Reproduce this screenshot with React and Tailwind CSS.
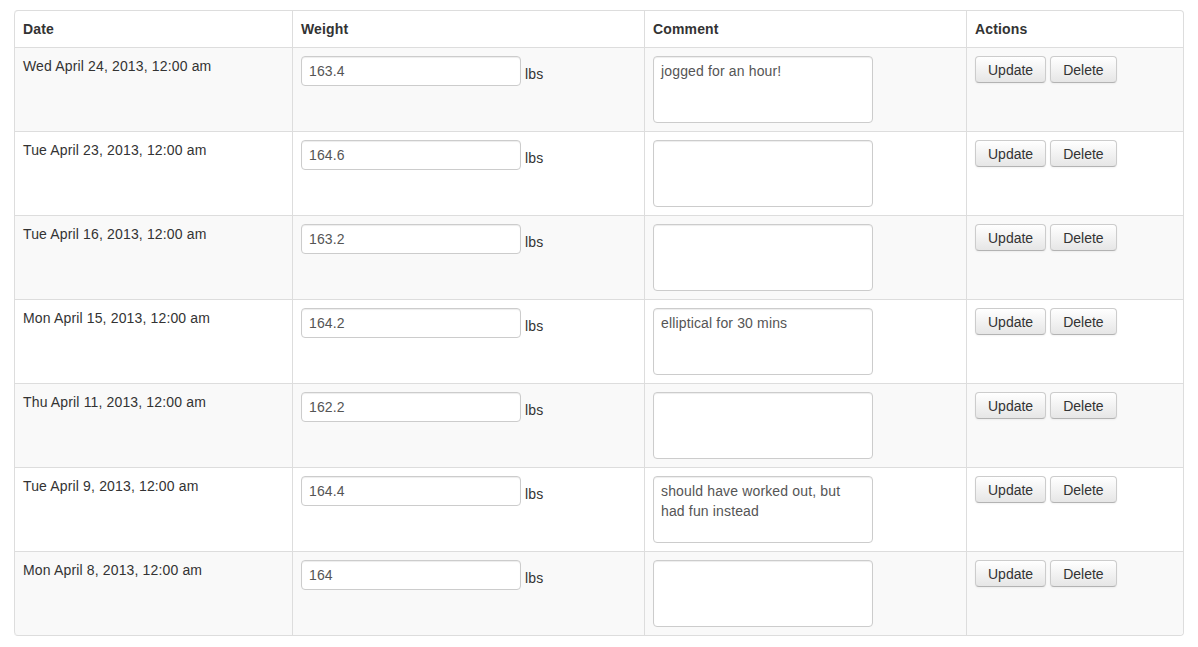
const entries = [
  { id: 1, date: "Wed April 24, 2013, 12:00 am", weight: "163.4", comment: "jogged for an hour!" },
  { id: 2, date: "Tue April 23, 2013, 12:00 am", weight: "164.6", comment: "" },
  { id: 3, date: "Tue April 16, 2013, 12:00 am", weight: "163.2", comment: "" },
  { id: 4, date: "Mon April 15, 2013, 12:00 am", weight: "164.2", comment: "elliptical for 30 mins" },
  { id: 5, date: "Thu April 11, 2013, 12:00 am", weight: "162.2", comment: "" },
  { id: 6, date: "Tue April 9, 2013, 12:00 am", weight: "164.4", comment: "should have worked out, but had fun instead" },
  { id: 7, date: "Mon April 8, 2013, 12:00 am", weight: "164", comment: "" },
]

const Btn = function ({ children }) {
  return (
    <button
      type="button"
      className="h-[27px] px-3 text-[14px] leading-none tracking-normal text-[#333] rounded-[4px] border border-[#ccc] border-b-[#b3b3b3] bg-linear-to-b from-white to-[#e6e6e6] shadow-[inset_0_1px_0_rgba(255,255,255,.2),0_1px_2px_rgba(0,0,0,.05)]"
    >
      {children}
    </button>
  )
}

export default function App() {
  const th = "border-l border-[#ddd] px-2 py-2 text-left font-bold leading-5"
  const td = "border-l border-t border-[#ddd] align-top px-2 pt-2 pb-2 leading-5"

  return (
    <div className="min-h-screen bg-white pl-[14px] pt-[10px] text-[14px] tracking-[0.15px] text-[#333] font-['Liberation_Sans',Arial,sans-serif]">
      <table className="table-fixed w-[1170px] border-separate border-spacing-0 border border-l-0 border-[#ddd] rounded-[4px]">
        <colgroup>
          <col className="w-[278px]" />
          <col className="w-[352px]" />
          <col className="w-[322px]" />
          <col className="w-[217px]" />
        </colgroup>
        <thead>
          <tr>
            <th className={`${th} rounded-tl-[4px]`}>Date</th>
            <th className={th}>Weight</th>
            <th className={th}>Comment</th>
            <th className={`${th} rounded-tr-[4px]`}>Actions</th>
          </tr>
        </thead>
        <tbody>
          {entries.map((e, i) => {
            const bg = i % 2 === 0 ? "bg-[#f9f9f9]" : "bg-white"
            const last = i === entries.length - 1
            return (
              <tr key={e.id} className={bg}>
                <td className={`${td} ${last ? "rounded-bl-[4px]" : ""}`}>{e.date}</td>
                <td className={td}>
                  <div className="flex items-start">
                    <input
                      type="text"
                      defaultValue={e.weight}
                      className="w-[220px] h-[30px] pl-[7px] pr-[6px] py-1 text-[14px] leading-5 tracking-[0.15px] text-[#555] bg-white border border-[#ccc] rounded-[4px] shadow-[inset_0_1px_1px_rgba(0,0,0,.075)] outline-none"
                    />
                    <span className="ml-1 pt-2 leading-5">lbs</span>
                  </div>
                </td>
                <td className={td}>
                  <textarea
                    defaultValue={e.comment}
                    className="block w-[220px] h-[67px] pl-[7px] pr-[20px] py-1 text-[14px] leading-5 tracking-[0.15px] text-[#555] bg-white border border-[#ccc] rounded-[4px] shadow-[inset_0_1px_1px_rgba(0,0,0,.075)] outline-none resize-none"
                  />
                </td>
                <td className={`${td} ${last ? "rounded-br-[4px]" : ""}`}>
                  <div className="flex gap-1">
                    <Btn>Update</Btn>
                    <Btn>Delete</Btn>
                  </div>
                </td>
              </tr>
            )
          })}
        </tbody>
      </table>
    </div>
  )
}
